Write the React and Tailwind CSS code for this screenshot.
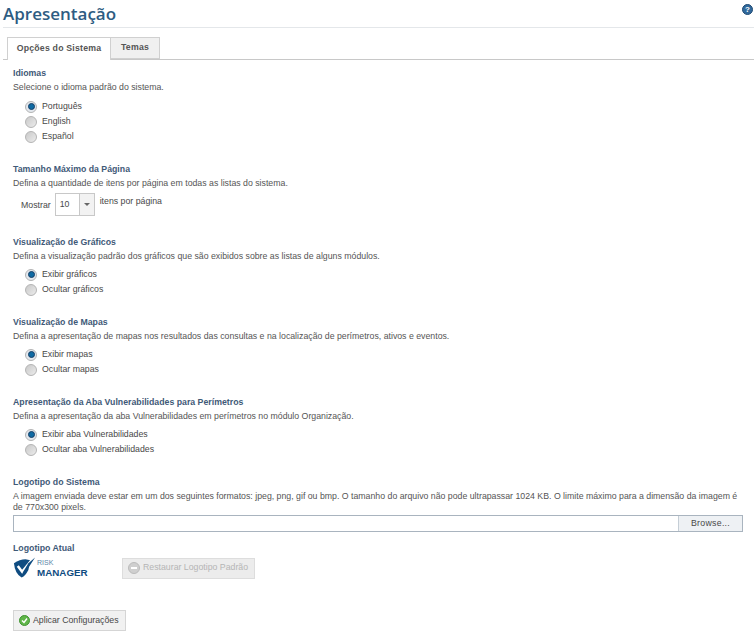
function Radio({ checked }) {
    return (
        <span className={`w-[12px] h-[12px] rounded-full border border-[#b4b4b4] flex items-center justify-center shrink-0 ${checked ? "bg-[#e3e8ee]" : "bg-gradient-to-br from-[#c9c9c9] to-[#ececec]"}`}>
            {checked && <span className="w-[7px] h-[7px] rounded-full bg-[#0f6aa3] border border-[#173f66]" />}
        </span>
    );
}

function RadioGroup({ options, className }) {
    return (
        <div className={`pl-[12px] flex flex-col ${className || "pt-[4px]"}`}>
            {options.map((op, i) => (
                <div key={op} className="h-[15px] flex items-center gap-[5px] text-[#484848]">
                    <Radio checked={i === 0} />
                    <span>{op}</span>
                </div>
            ))}
        </div>
    );
}

function Secao({ titulo, descricao, children, className }) {
    return (
        <section className={className}>
            <h3 className="h-[15px] leading-[14px] font-bold text-[#3f5a78]">{titulo}</h3>
            <p className="leading-[11px] py-[1px] text-[#555]">{descricao}</p>
            {children}
        </section>
    );
}

function Logo() {
    return (
        <div className="flex items-center w-[78px] h-[22px]">
            <svg width="24" height="22" viewBox="0 0 25 22" className="shrink-0">
                <path d="M1 6 Q7 2 13 2 L18 3 L16 13 Q13 19 9 21 Q2 17 1 6Z" fill="#0f4c81" />
                <path d="M5 9 L9.5 15 L21 1" fill="none" stroke="#fff" strokeWidth="2.6" />
                <path d="M16 6 L23 0 L12 17 L10 16Z" fill="#0f4c81" />
            </svg>
            <div className="flex flex-col leading-none">
                <span className="text-[7px] leading-[8px] text-[#5b87a8]">RISK</span>
                <span className="text-[9.8px] leading-[11px] font-bold text-[#0f4c81]">MANAGER</span>
            </div>
        </div>
    );
}

export default function App() {
    return (
        <div className="w-[754px] h-[635px] overflow-hidden bg-white font-['Liberation_Sans',Arial,sans-serif] text-[8.75px]">
            <header className="h-[28px] ml-[3px] border-b border-[#e4e7ea] flex justify-between items-start">
                <h1 className="text-[17px] leading-[27px] font-['Open_Sans',sans-serif] font-semibold text-[#2e5c82]">Apresentação</h1>
                <span className="mt-[4px] mr-[1px] w-[11px] h-[11px] rounded-full bg-[#31699c] border border-[#1f4a73] text-white text-[8px] leading-[9px] text-center font-bold">?</span>
            </header>

            <nav className="mt-[9px] h-[23px] ml-[3px] border-b border-[#c8c8c8] flex pl-[4px]">
                <button className="h-[23px] w-[104px] border border-b-0 border-[#d0d0d0] bg-white text-[#555] font-bold tracking-[0.2px]">Opções do Sistema</button>
                <button className="h-[22px] w-[49px] border border-l-0 border-[#d0d0d0] bg-[#f0f0f0] text-[#555] font-bold tracking-[0.2px]">Temas</button>
            </nav>

            <main className="pl-[13px] pr-[11px] pt-[6px]">
                <Secao titulo="Idiomas" descricao="Selecione o idioma padrão do sistema.">
                    <RadioGroup className="pt-[5px]" options={["Português", "English", "Español"]} />
                </Secao>

                <Secao className="mt-[18px]" titulo="Tamanho Máximo da Página" descricao="Defina a quantidade de itens por página em todas as listas do sistema.">
                    <div className="flex items-start mt-[3px] ml-[8px] text-[#484848]">
                        <span className="mt-[6px] mr-[4px]">Mostrar</span>
                        <div className="w-[40px] h-[23px] border border-[#c8c8c8] flex items-center">
                            <span className="w-[24px] pl-[4px] border-r border-[#c8c8c8] leading-[21px] h-[21px]">10</span>
                            <span className="flex-1 h-[21px] flex items-center justify-center bg-[#f2f2f2]">
                                <span className="border-x-[3px] border-t-[3px] border-x-transparent border-t-[#666]" />
                            </span>
                        </div>
                        <span className="ml-[5px] mt-[2px]">itens por página</span>
                    </div>
                </Secao>

                <Secao className="mt-[19px]" titulo="Visualização de Gráficos" descricao="Defina a visualização padrão dos gráficos que são exibidos sobre as listas de alguns módulos.">
                    <RadioGroup options={["Exibir gráficos", "Ocultar gráficos"]} />
                </Secao>

                <Secao className="mt-[18px]" titulo="Visualização de Mapas" descricao="Defina a apresentação de mapas nos resultados das consultas e na localização de perímetros, ativos e eventos.">
                    <RadioGroup options={["Exibir mapas", "Ocultar mapas"]} />
                </Secao>

                <Secao className="mt-[18px]" titulo="Apresentação da Aba Vulnerabilidades para Perímetros" descricao="Defina a apresentação da aba Vulnerabilidades em perímetros no módulo Organização.">
                    <RadioGroup options={["Exibir aba Vulnerabilidades", "Ocultar aba Vulnerabilidades"]} />
                </Secao>

                <Secao className="mt-[18px]" titulo="Logotipo do Sistema" descricao="A imagem enviada deve estar em um dos seguintes formatos: jpeg, png, gif ou bmp. O tamanho do arquivo não pode ultrapassar 1024 KB. O limite máximo para a dimensão da imagem é de 770x300 pixels.">
                    <div className="mt-[1px] h-[17px] flex border border-[#a9b4bf]">
                        <div className="flex-1 bg-white" />
                        <button className="w-[64px] border-l border-[#c5ced6] bg-[#eef1f4] text-[#484848] tracking-[0.3px]">Browse...</button>
                    </div>
                </Secao>

                <section className="mt-[9px]">
                    <h3 className="h-[14px] leading-[14px] font-bold text-[#3f5a78]">Logotipo Atual</h3>
                    <div className="flex items-center mt-[2px]">
                        <Logo />
                        <button className="ml-[31px] w-[133px] h-[21px] bg-[#ececec] border border-[#ddd] text-[#b5b5b5] flex items-center gap-[3px] px-[5px] whitespace-nowrap">
                            <span className="w-[12px] h-[12px] rounded-full bg-[#cfcfcf] border border-[#bbb] flex items-center justify-center">
                                <span className="w-[6px] h-[2px] bg-white" />
                            </span>
                            Restaurar Logotipo Padrão
                        </button>
                    </div>
                    <button className="mt-[31px] w-[113px] h-[21px] bg-[#f1f1f1] border border-[#d5d5d5] text-[#484848] flex items-center gap-[3px] px-[5px] whitespace-nowrap">
                        <span className="w-[11px] h-[11px] rounded-full bg-[#5fb548] border border-[#3f9331] flex items-center justify-center">
                            <svg width="7" height="7" viewBox="0 0 7 7"><path d="M1 3.5 L3 5.5 L6 1.5" fill="none" stroke="#fff" strokeWidth="1.4" /></svg>
                        </span>
                        Aplicar Configurações
                    </button>
                </section>
            </main>
        </div>
    );
}
